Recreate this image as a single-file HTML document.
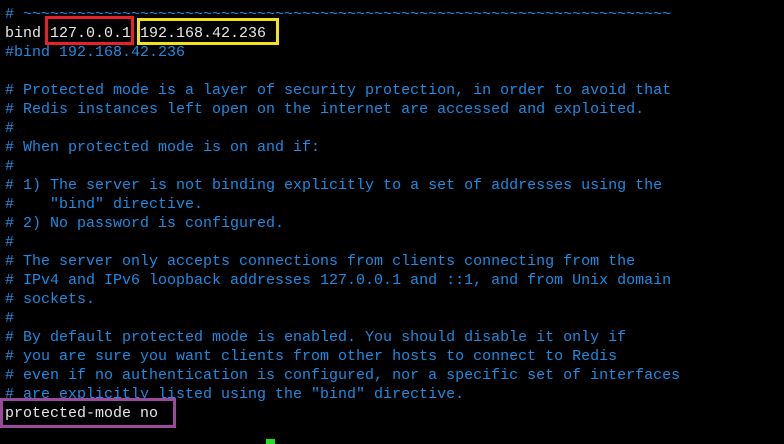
<!DOCTYPE html>
<html><head><style>
html,body{margin:0;padding:0;background:#000;width:784px;height:444px;overflow:hidden}
pre{margin:0;position:absolute;left:5px;top:5px;font-family:"Liberation Mono",monospace;font-size:15px;line-height:19px;color:#1c8ce3;white-space:pre}
.w{color:#e6e6e6}
.box{position:absolute;border:3px solid;box-sizing:border-box}
</style></head><body>
<pre># ~~~~~~~~~~~~~~~~~~~~~~~~~~~~~~~~~~~~~~~~~~~~~~~~~~~~~~~~~~~~~~~~~~~~~~~~
<span class="w">bind 127.0.0.1 192.168.42.236</span>
#bind 192.168.42.236

# Protected mode is a layer of security protection, in order to avoid that
# Redis instances left open on the internet are accessed and exploited.
#
# When protected mode is on and if:
#
# 1) The server is not binding explicitly to a set of addresses using the
#    "bind" directive.
# 2) No password is configured.
#
# The server only accepts connections from clients connecting from the
# IPv4 and IPv6 loopback addresses 127.0.0.1 and ::1, and from Unix domain
# sockets.
#
# By default protected mode is enabled. You should disable it only if
# you are sure you want clients from other hosts to connect to Redis
# even if no authentication is configured, nor a specific set of interfaces
# are explicitly listed using the "bind" directive.
<span class="w">protected-mode no</span></pre>
<div class="box" style="left:45px;top:16px;width:89px;height:29px;border-color:#e8202a"></div>
<div class="box" style="left:137px;top:18px;width:142px;height:27px;border-color:#f2e21a"></div>
<div class="box" style="left:0;top:398px;width:176px;height:30px;border-color:#9a4a9c"></div>
<div style="position:absolute;left:266px;top:439px;width:9px;height:5px;background:#1ee01e"></div>
</body></html>
